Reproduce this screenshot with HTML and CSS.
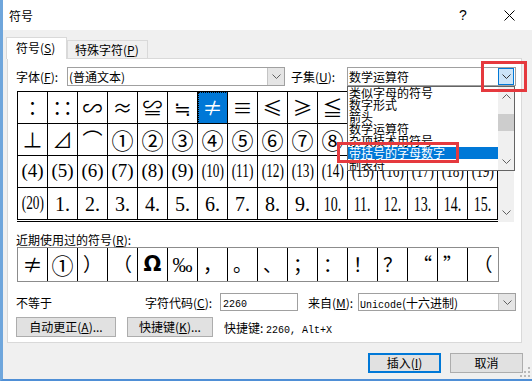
FILE: index.html
```html
<!DOCTYPE html>
<html lang="zh-CN">
<head>
    <meta charset="UTF-8">
    <title>符号</title>
    <link rel="stylesheet" href="styles.css">
</head>
<body>
<div class="window">
    <div class="titlebar">
        <span class="title">符号</span>
        <span class="help">?</span>
        <span class="close">
            <svg width="11" height="11" viewBox="0 0 11 11"><path d="M0.5 0.5 L10.5 10.5 M10.5 0.5 L0.5 10.5" stroke="#000" stroke-width="1" fill="none"/></svg>
        </span>
    </div>

    <div class="tabs">
        <div class="tab active">符号(<u>S</u>)</div>
        <div class="tab">特殊字符(<u>P</u>)</div>
    </div>

    <div class="panel">
        <!-- font / subset -->
        <div class="font-row">
            <span class="lbl lbl-font">字体(<u>F</u>):</span>
            <div class="combo combo-font">
                <span class="combo-text">(普通文本)</span>
                <span class="combo-btn">
                    <svg width="9" height="5" viewBox="0 0 9 5"><path d="M0.5 0.5 L4.5 4.5 L8.5 0.5" stroke="#606060" fill="none"/></svg>
                </span>
            </div>
            <span class="lbl lbl-subset">子集(<u>U</u>):</span>
            <div class="combo combo-subset">
                <span class="combo-text">数学运算符</span>
                <span class="combo-btn hot">
                    <svg width="9" height="5" viewBox="0 0 9 5"><path d="M0.5 0.5 L4.5 4.5 L8.5 0.5" stroke="#333" fill="none"/></svg>
                </span>
                <div class="dropdown">
                    <ul class="dropdown-list">
                        <li>类似字母的符号</li>
                        <li>数字形式</li>
                        <li>箭头</li>
                        <li>数学运算符</li>
                        <li>杂项技术用符号</li>
                        <li class="selected">带括号的字母数字</li>
                        <li>制表符</li>
                    </ul>
                    <div class="list-scroll">
                        <svg width="9" height="5" viewBox="0 0 9 5"><path d="M0.5 4.5 L4.5 0.5 L8.5 4.5" stroke="#606060" fill="none"/></svg>
                        <span class="thumb"></span>
                        <svg class="down" width="9" height="5" viewBox="0 0 9 5"><path d="M0.5 0.5 L4.5 4.5 L8.5 0.5" stroke="#606060" fill="none"/></svg>
                    </div>
                </div>
            </div>
        </div>

        <!-- symbol grid -->
        <div class="symbol-area">
            <div class="grid-box">
                <div class="grid">
                    <span class="cell">∶</span><span class="cell">∷</span><span class="cell">∽</span><span class="cell">≈</span>
                    <span class="cell">≌</span><span class="cell">≒</span><span class="cell current">≠</span><span class="cell">≡</span>
                    <span class="cell">≤</span><span class="cell">≥</span><span class="cell">≦</span><span class="cell">≧</span>
                    <span class="cell">≮</span><span class="cell">≯</span><span class="cell">⊕</span><span class="cell">⊙</span>

                    <span class="cell">⊥</span><span class="cell">⊿</span><span class="cell">⌒</span><span class="cell c">①</span>
                    <span class="cell c">②</span><span class="cell c">③</span><span class="cell c">④</span><span class="cell c">⑤</span>
                    <span class="cell c">⑥</span><span class="cell c">⑦</span><span class="cell c">⑧</span><span class="cell c">⑨</span>
                    <span class="cell c">⑩</span><span class="cell p">(1)</span><span class="cell p">(2)</span><span class="cell p">(3)</span>

                    <span class="cell p">(4)</span><span class="cell p">(5)</span><span class="cell p">(6)</span><span class="cell p">(7)</span>
                    <span class="cell p">(8)</span><span class="cell p">(9)</span><span class="cell p"><i>(10)</i></span><span class="cell p"><i>(11)</i></span>
                    <span class="cell p"><i>(12)</i></span><span class="cell p"><i>(13)</i></span><span class="cell p"><i>(14)</i></span><span class="cell p"><i>(15)</i></span>
                    <span class="cell p"><i>(16)</i></span><span class="cell p"><i>(17)</i></span><span class="cell p"><i>(18)</i></span><span class="cell p"><i>(19)</i></span>

                    <span class="cell p"><i>(20)</i></span><span class="cell n">1.</span><span class="cell n">2.</span><span class="cell n">3.</span>
                    <span class="cell n">4.</span><span class="cell n">5.</span><span class="cell n">6.</span><span class="cell n">7.</span>
                    <span class="cell n">8.</span><span class="cell n">9.</span><span class="cell n"><i>10.</i></span><span class="cell n"><i>11.</i></span>
                    <span class="cell n"><i>12.</i></span><span class="cell n"><i>13.</i></span><span class="cell n"><i>14.</i></span><span class="cell n"><i>15.</i></span>
                </div>
            </div>
            <div class="vscroll">
                <svg width="9" height="5" viewBox="0 0 9 5"><path d="M0.5 0.5 L4.5 4.5 L8.5 0.5" stroke="#606060" fill="none"/></svg>
            </div>
        </div>

        <!-- recently used -->
        <div class="recent-label">近期使用过的符号(<u>R</u>):</div>
        <div class="recent">
            <span class="cell">≠</span><span class="cell c">①</span><span class="cell cjk">）</span><span class="cell cjk">（</span>
            <span class="cell omega">Ω</span><span class="cell permille">‰</span><span class="cell cjk">，</span><span class="cell cjk">。</span>
            <span class="cell cjk">、</span><span class="cell cjk">；</span><span class="cell cjk">：</span><span class="cell cjk">！</span>
            <span class="cell cjk">？</span><span class="cell cjk">“</span><span class="cell cjk">”</span><span class="cell cjk">（</span>
        </div>

        <!-- character info -->
        <div class="info-row">
            <span class="desc">不等于</span>
            <span class="lbl lbl-code">字符代码(<u>C</u>):</span>
            <div class="code-input"><span class="mono">2260</span></div>
            <span class="lbl lbl-from">来自(<u>M</u>):</span>
            <div class="combo combo-from">
                <span class="combo-text"><span class="mono">Unicode</span>(十六进制)</span>
                <span class="combo-btn">
                    <svg width="9" height="5" viewBox="0 0 9 5"><path d="M0.5 0.5 L4.5 4.5 L8.5 0.5" stroke="#606060" fill="none"/></svg>
                </span>
            </div>
        </div>

        <div class="button-row">
            <button class="btn btn-auto">自动更正(<u>A</u>)...</button>
            <button class="btn btn-keys">快捷键(<u>K</u>)...</button>
            <span class="shortcut">快捷键: <span class="mono">2260, Alt+X</span></span>
        </div>
    </div>

    <div class="footer">
        <button class="btn btn-insert">插入(<u>I</u>)</button>
        <button class="btn btn-cancel">取消</button>
    </div>

    <svg class="grip" width="10" height="10" viewBox="0 0 10 10">
        <rect x="8" y="0" width="2" height="2" fill="#b8b8b8"/>
        <rect x="4" y="4" width="2" height="2" fill="#b8b8b8"/>
        <rect x="8" y="4" width="2" height="2" fill="#b8b8b8"/>
        <rect x="0" y="8" width="2" height="2" fill="#b8b8b8"/>
        <rect x="4" y="8" width="2" height="2" fill="#b8b8b8"/>
        <rect x="8" y="8" width="2" height="2" fill="#b8b8b8"/>
    </svg>

    <!-- annotation boxes -->
    <div class="mark mark-button"></div>
    <div class="mark mark-item"></div>
</div>
</body>
</html>
```

FILE: styles.css
```css
/* Symbol dialog */
* {
    box-sizing: border-box;
}

body {
    margin: 0;
    font-family: "Noto Sans CJK SC", sans-serif;
    font-size: 12px;
    color: #000;
    background: #fff;
}

u {
    text-decoration: underline;
}

.window {
    position: relative;
    width: 532px;
    height: 381px;
    background: #f0f0f0;
    border-left: 3px solid #6fa6dc;
    border-bottom: 2px solid #4f8fd6;
    overflow: hidden;
}

/* title bar */
.titlebar {
    display: flex;
    align-items: center;
    height: 30px;
    background: #fff;
    padding-left: 6px;
}

.title {
    font-size: 12px;
}

.help {
    margin-left: auto;
    width: 46px;
    text-align: center;
    font-family: "Liberation Sans", sans-serif;
    font-size: 14px;
}

.close {
    width: 46px;
    display: flex;
    justify-content: center;
}

/* tabs */
.tabs {
    display: flex;
    align-items: flex-end;
    height: 28px;
    padding-left: 3px;
}

.tab {
    height: 18px;
    width: 81px;
    padding-left: 7px;
    line-height: 17px;
    border: 1px solid #d9d9d9;
    border-bottom: none;
    background: #f0f0f0;
}

.tab.active {
    position: relative;
    width: 61px;
    height: 22px;
    margin-bottom: -1px;
    padding-left: 9px;
    line-height: 20px;
    background: #fff;
}

/* main panel */
.panel {
    margin-left: 4px;
    width: 515px;
    height: 285px;
    background: #fff;
    border: 1px solid #d9d9d9;
    padding: 8px 0 0 8px;
}

.font-row {
    display: flex;
    align-items: center;
    height: 19px;
}

.lbl {
    white-space: nowrap;
}

.lbl-font {
    width: 51px;
}

.lbl-subset {
    width: 56px;
    margin-left: 6px;
}

.combo {
    position: relative;
    display: flex;
    align-items: center;
    height: 19px;
    border: 1px solid #a0a0a0;
    background: #fff;
}

.combo-text {
    padding-left: 1px;
    white-space: nowrap;
}

.combo-btn {
    margin-left: auto;
    width: 17px;
    height: 17px;
    display: flex;
    align-items: center;
    justify-content: center;
    background: #e5e5e5;
    border-left: 1px solid #c4c4c4;
}

.combo-btn.hot {
    background: #cce4f7;
    border: 1px solid #0078d7;
    width: 16px;
    margin-right: 1px;
}

.combo-font {
    width: 218px;
}

.combo-subset {
    width: 169px;
}

/* subset dropdown list */
.dropdown {
    position: absolute;
    left: -1px;
    top: 18px;
    width: 168px;
    height: 85px;
    display: flex;
    background: #fff;
    border: 1px solid #646464;
    z-index: 5;
}

.dropdown-list {
    list-style: none;
    margin: 0;
    padding: 0;
    width: 150px;
    font-size: 12px;
    line-height: 12px;
}

.dropdown-list li {
    height: 12px;
    padding-left: 1px;
    white-space: nowrap;
}

.dropdown-list li.selected {
    background: #0078d7;
    color: #fff;
}

.list-scroll {
    width: 16px;
    background: #f0f0f0;
    display: flex;
    flex-direction: column;
    align-items: center;
    padding-top: 7px;
}

.list-scroll .thumb {
    width: 16px;
    height: 17px;
    margin-top: 15px;
    background: #cdcdcd;
}

.list-scroll .down {
    margin-top: auto;
    margin-bottom: 6px;
}

/* symbol grid */
.symbol-area {
    display: flex;
    margin-top: 5px;
    margin-left: 1px;
}

.grid-box {
    width: 481px;
    height: 131px;
    overflow: hidden;
    border-bottom: 1px solid #000;
}

.grid {
    display: grid;
    grid-template-columns: repeat(16, 30px);
    grid-auto-rows: 32px;
    border-top: 1px solid #000;
    border-left: 1px solid #000;
}

.cell {
    display: flex;
    align-items: center;
    justify-content: center;
    border-right: 1px solid #000;
    border-bottom: 1px solid #000;
    font-family: "Noto Sans CJK SC", "DejaVu Sans", sans-serif;
    font-size: 20px;
    line-height: 1.2;
    white-space: nowrap;
}

.cell.current {
    background: #0078d7;
    color: #fff;
    outline: 1px dotted #000;
    outline-offset: -1px;
}

.cell.c {
    font-size: 22px;
}

.cell.p,
.cell.n {
    font-family: "Liberation Serif", serif;
    font-size: 20px;
}

.cell.p {
    font-size: 19px;
}

.cell i {
    font-style: normal;
    display: inline-block;
    margin: 0 -5px;
    transform: scaleX(0.7);
}

.vscroll {
    width: 16px;
    height: 131px;
    background: #f0f0f0;
    display: flex;
    flex-direction: column;
    justify-content: flex-end;
    align-items: center;
    padding-bottom: 7px;
}

/* recently used */
.recent-label {
    margin-top: 10px;
    height: 15px;
    line-height: 15px;
}

.recent {
    display: grid;
    grid-template-columns: repeat(16, 30px);
    width: 482px;
    height: 35px;
    margin-left: 1px;
    border: 1px solid #8c8c8c;
}

.recent .cell {
    border-bottom: none;
}

.recent .cell:last-child {
    border-right: none;
}

.recent .cjk {
    font-size: 19px;
}

.recent .omega {
    font-family: "DejaVu Sans", sans-serif;
    font-weight: bold;
    font-size: 21px;
}

.recent .permille {
    font-family: "Liberation Serif", serif;
    font-size: 20px;
}

/* char info */
.info-row {
    display: flex;
    align-items: center;
    height: 18px;
    margin-top: 11px;
}

.desc {
    width: 129px;
}

.lbl-code {
    width: 75px;
}

.code-input {
    width: 78px;
    height: 18px;
    border: 1px solid #a0a0a0;
    padding-left: 2px;
    line-height: 16px;
}

.lbl-from {
    width: 50px;
    margin-left: 10px;
}

.combo-from {
    width: 158px;
    height: 18px;
}

.combo-from .combo-btn {
    height: 16px;
}

.mono {
    font-family: "Liberation Mono", monospace;
    font-size: 10px;
}

.button-row {
    display: flex;
    align-items: center;
    margin-top: 6px;
    height: 20px;
}

.btn {
    height: 20px;
    padding: 0;
    font-family: "Noto Sans CJK SC", sans-serif;
    font-size: 12px;
    line-height: 18px;
    color: #000;
    background: #e1e1e1;
    border: 1px solid #adadad;
}

.btn-auto {
    width: 100px;
}

.btn-keys {
    width: 86px;
    margin-left: 11px;
}

.shortcut {
    margin-left: 11px;
    white-space: nowrap;
}

/* bottom buttons */
.footer {
    display: flex;
    justify-content: flex-end;
    padding: 10px 9px 0 0;
}

.btn-insert,
.btn-cancel {
    width: 73px;
}

.btn-insert {
    border-color: #0078d7;
    box-shadow: inset 0 0 0 1px #0078d7;
}

.btn-cancel {
    margin-left: 9px;
}

.grip {
    position: absolute;
    right: 2px;
    bottom: 2px;
}

/* red annotation boxes */
.mark {
    position: absolute;
    border: 3px solid #e5393e;
    z-index: 10;
}

.mark-button {
    left: 478px;
    top: 61px;
    width: 46px;
    height: 31px;
}

.mark-item {
    left: 334px;
    top: 142px;
    width: 122px;
    height: 21px;
}
```
